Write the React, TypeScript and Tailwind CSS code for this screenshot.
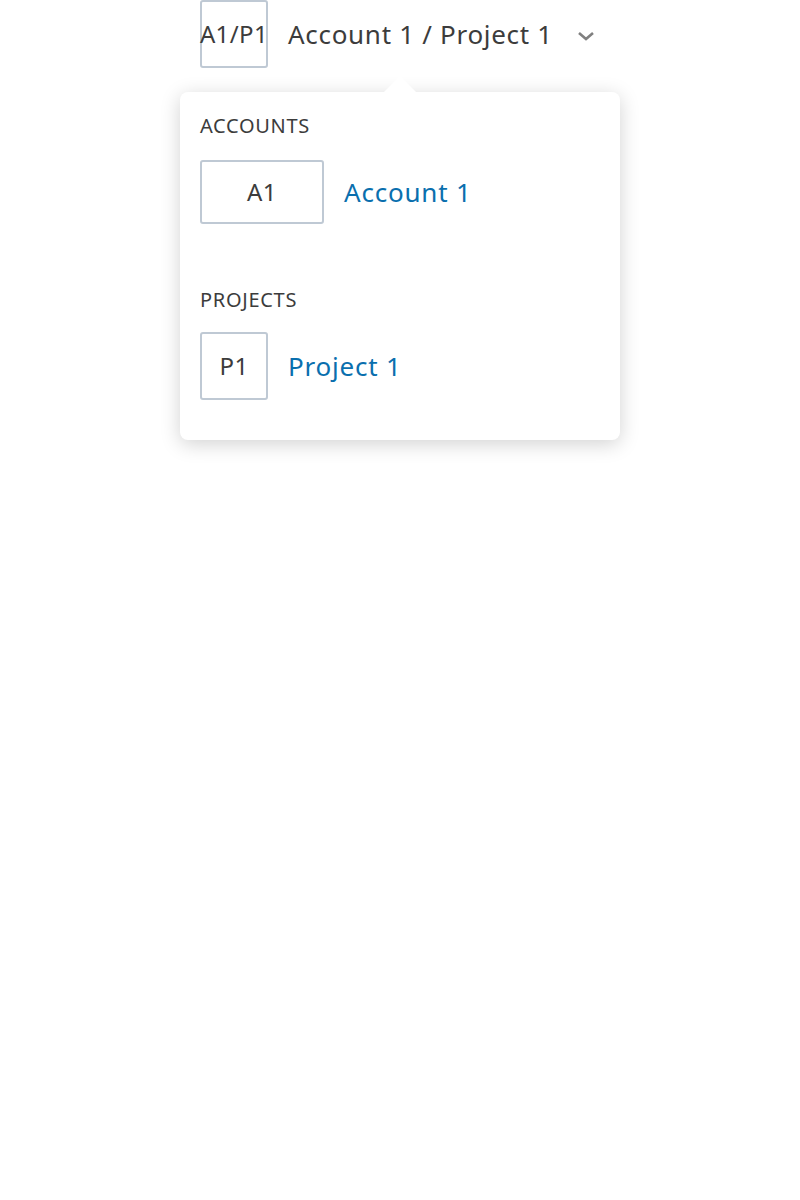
const font = { fontFamily: '"Noto Sans", "Open Sans", sans-serif' };

const Avatar = ({ label, className }: { label: string; className: string }) => (
  <div
    className={`flex items-center justify-center border-2 border-[#bfc9d4] rounded-[3px] text-[#3c3c3c] text-[24px] leading-none tracking-[0.4px] whitespace-nowrap overflow-visible ${className}`}
  >
    {label}
  </div>
);

export default function App() {
  return (
    <div className="min-h-[1200px] bg-white" style={font}>
      <div className="w-[440px] mx-auto">
        <div className="flex items-center h-[68px] pl-5">
          <Avatar label="A1/P1" className="w-[68px] h-[68px]" />
          <span className="ml-5 text-[26px] text-[#3c3c3c] tracking-[0.7px]">Account 1 / Project 1</span>
          <svg className="ml-6 mt-1" width="18" height="12" viewBox="0 0 18 12">
            <polyline points="2,3 9,9 16,3" fill="none" stroke="#808080" strokeWidth="2.6" />
          </svg>
        </div>
        <div className="relative mt-6 bg-white rounded-lg shadow-[0_4px_20px_rgba(0,0,0,0.18)] px-5 pt-5 pb-10">
          <div className="absolute -top-4 left-1/2 -translate-x-1/2 w-0 h-0 border-l-[16px] border-r-[16px] border-b-[16px] border-l-transparent border-r-transparent border-b-white" />
          <div className="text-[20px] text-[#3c3c3c] tracking-[0.7px] leading-7">ACCOUNTS</div>
          <div className="flex items-center mt-5">
            <Avatar label="A1" className="w-[124px] h-[64px]" />
            <span className="ml-5 text-[26px] text-[#0a6fae] tracking-[0.8px]">Account 1</span>
          </div>
          <div className="mt-[62px] text-[20px] text-[#3c3c3c] tracking-[0.7px] leading-7">PROJECTS</div>
          <div className="flex items-center mt-[18px]">
            <Avatar label="P1" className="w-[68px] h-[68px]" />
            <span className="ml-5 text-[26px] text-[#0a6fae] tracking-[0.8px]">Project 1</span>
          </div>
        </div>
      </div>
    </div>
  );
}
